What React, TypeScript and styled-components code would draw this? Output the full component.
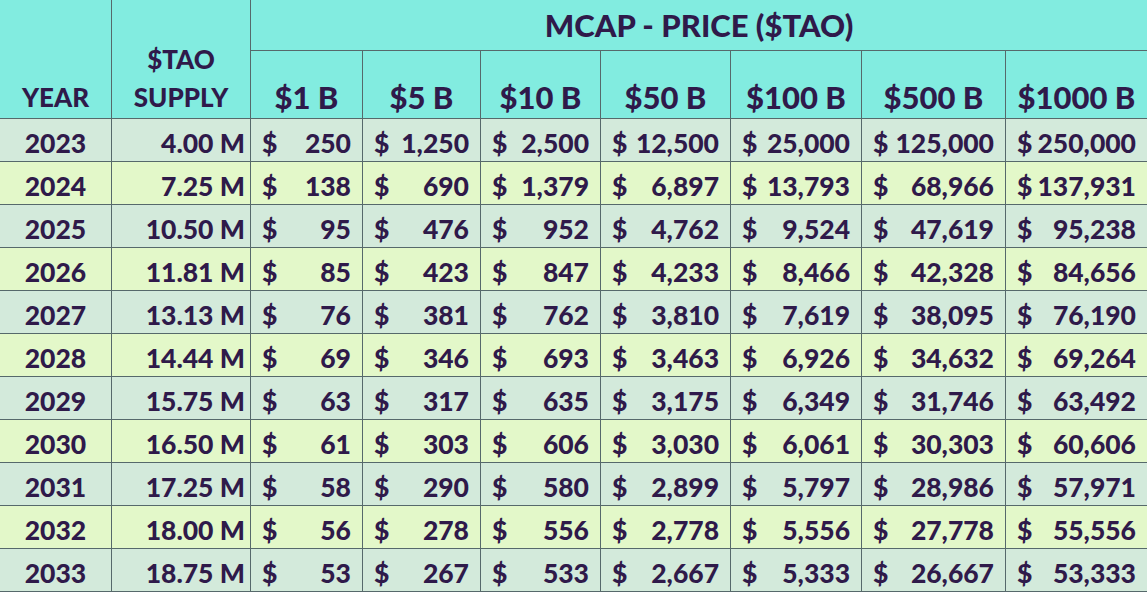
import React from "react";
import styled, { createGlobalStyle } from "styled-components";

const GlobalStyle = createGlobalStyle`
  html, body { margin: 0; padding: 0; background: #ffffff; }
  body { font-family: Lato, "Open Sans", sans-serif; }
`;

const LINE = "#56696b";
const HEAD = "#82ece0";
const ODD = "#d3eadb";
const EVEN = "#e3f8c9";
const INK = "#2f1a4a";

const Grid = styled.div`
  display: grid;
  width: 1147px;
  grid-template-columns: 111px 138px 111px 117px 119px 129px 130px 143px 141px;
  grid-template-rows: 50px 67px repeat(11, 42px);
  gap: 1px;
  background: ${LINE};
  border-bottom: 1px solid ${LINE};
  font-family: Lato, "Open Sans", sans-serif;
  font-weight: 900;
  color: ${INK};
`;

const HeadCell = styled.div<{ $rowSpan?: number; $colSpan?: number; $size: number; $align?: "end" | "center" }>`
  background: ${HEAD};
  grid-row: span ${(p) => p.$rowSpan ?? 1};
  grid-column: span ${(p) => p.$colSpan ?? 1};
  display: flex;
  flex-direction: column;
  align-items: center;
  justify-content: ${(p) => (p.$align === "end" ? "flex-end" : "center")};
  text-align: center;
  font-size: ${(p) => p.$size}px;
  line-height: 38px;
  padding-bottom: ${(p) => (p.$align === "end" ? "2px" : "0")};
  white-space: nowrap;
`;

const Cell = styled.div<{ $even: boolean; $kind: "year" | "supply" | "money" }>`
  background: ${(p) => (p.$even ? EVEN : ODD)};
  display: flex;
  align-items: center;
  font-size: 26.5px;
  white-space: nowrap;
  padding-top: 5px;
  box-sizing: border-box;
  justify-content: ${(p) =>
    p.$kind === "year" ? "center" : p.$kind === "supply" ? "flex-end" : "space-between"};
  padding-left: ${(p) => (p.$kind === "money" ? "11px" : "0")};
  padding-right: ${(p) => (p.$kind === "supply" ? "5px" : p.$kind === "money" ? "11px" : "0")};
`;

const rows: [string, string, string[]][] = [
  ["2023", "4.00 M", ["250", "1,250", "2,500", "12,500", "25,000", "125,000", "250,000"]],
  ["2024", "7.25 M", ["138", "690", "1,379", "6,897", "13,793", "68,966", "137,931"]],
  ["2025", "10.50 M", ["95", "476", "952", "4,762", "9,524", "47,619", "95,238"]],
  ["2026", "11.81 M", ["85", "423", "847", "4,233", "8,466", "42,328", "84,656"]],
  ["2027", "13.13 M", ["76", "381", "762", "3,810", "7,619", "38,095", "76,190"]],
  ["2028", "14.44 M", ["69", "346", "693", "3,463", "6,926", "34,632", "69,264"]],
  ["2029", "15.75 M", ["63", "317", "635", "3,175", "6,349", "31,746", "63,492"]],
  ["2030", "16.50 M", ["61", "303", "606", "3,030", "6,061", "30,303", "60,606"]],
  ["2031", "17.25 M", ["58", "290", "580", "2,899", "5,797", "28,986", "57,971"]],
  ["2032", "18.00 M", ["56", "278", "556", "2,778", "5,556", "27,778", "55,556"]],
  ["2033", "18.75 M", ["53", "267", "533", "2,667", "5,333", "26,667", "53,333"]],
];

const caps = ["$1 B", "$5 B", "$10 B", "$50 B", "$100 B", "$500 B", "$1000 B"];

export default function App() {
  return (
    <>
      <GlobalStyle />
      <Grid>
        <HeadCell $rowSpan={2} $size={26} $align="end">YEAR</HeadCell>
        <HeadCell $rowSpan={2} $size={26} $align="end">
          <span>$TAO</span>
          <span>SUPPLY</span>
        </HeadCell>
        <HeadCell $colSpan={7} $size={31}>MCAP - PRICE ($TAO)</HeadCell>
        {caps.map((c) => (
          <HeadCell key={c} $size={31} $align="end">{c}</HeadCell>
        ))}
        {rows.map(([year, supply, vals], i) => (
          <React.Fragment key={year}>
            <Cell $even={i % 2 === 1} $kind="year">{year}</Cell>
            <Cell $even={i % 2 === 1} $kind="supply">{supply}</Cell>
            {vals.map((v, j) => (
              <Cell key={j} $even={i % 2 === 1} $kind="money">
                <span>$</span>
                <span>{v}</span>
              </Cell>
            ))}
          </React.Fragment>
        ))}
      </Grid>
    </>
  );
}
